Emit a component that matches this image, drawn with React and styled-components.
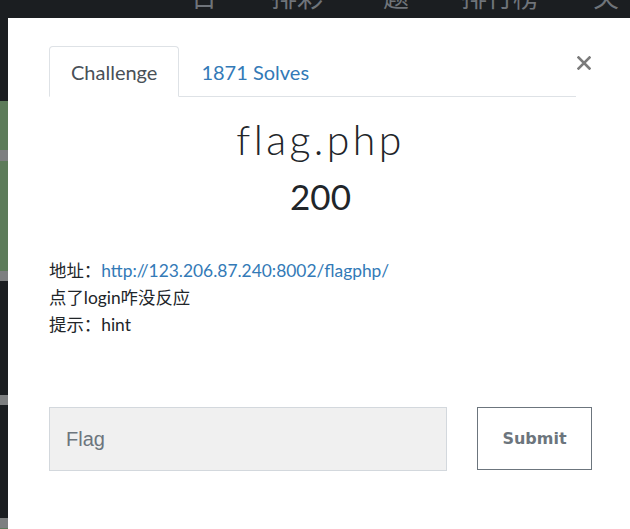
import React from 'react';
import styled, { createGlobalStyle } from 'styled-components';

const GlobalStyle = createGlobalStyle`
    html, body {
        margin: 0;
        padding: 0;
        height: 100%;
        overflow: hidden;
        background: #1b1e21;
    }
    #root {
        height: 100%;
    }
`;

const Page = styled.div`
    height: 100vh;
    display: flex;
    flex-direction: column;
    background: #1b1e21;
`;

const TopNav = styled.div`
    height: 18px;
    flex: none;
    display: flex;
    overflow: hidden;
    font-family: 'Noto Sans CJK SC', sans-serif;
    font-size: 26px;
    color: #6f747a;
    line-height: 1;
`;

const NavItem = styled.span`
    margin-top: -17px;
    margin-left: ${(props) => props.gap}px;
    white-space: nowrap;
`;

const Side = styled.div`
    width: 8px;
    flex: 1;
    display: flex;
    flex-direction: column;
`;

const Band = styled.div`
    height: ${(props) => props.h}px;
    flex: ${(props) => (props.grow ? 1 : 'none')};
    background: ${(props) => props.color};
`;

const Modal = styled.div`
    position: fixed;
    left: 8px;
    top: 18px;
    width: 624px;
    bottom: 0;
    background: #fff;
    box-sizing: border-box;
    padding: 28px 40px 0 41px;
    font-family: Lato, 'Noto Sans CJK SC', sans-serif;
    color: #212529;
`;

const Header = styled.div`
    display: flex;
    align-items: flex-start;
`;

const Tabs = styled.div`
    flex: 1;
    display: flex;
    border-bottom: 1px solid #dee2e6;
`;

const Tab = styled.div`
    height: 51px;
    box-sizing: border-box;
    padding: 0 21px;
    display: flex;
    align-items: center;
    font-size: 20px;
    margin-bottom: -1px;
    border: 1px solid ${(props) => (props.active ? '#dee2e6' : 'transparent')};
    border-bottom-color: ${(props) => (props.active ? '#fff' : 'transparent')};
    border-radius: 4px 4px 0 0;
    background: ${(props) => (props.active ? '#fff' : 'transparent')};
    color: ${(props) => (props.active ? '#495057' : '#337ab7')};
`;

const Close = styled.button`
    width: 16px;
    height: 16px;
    margin-top: 9px;
    padding: 0;
    border: 0;
    background: none;
    display: flex;
    align-items: center;
    justify-content: center;
`;

const Title = styled.h1`
    margin: 19px 0 0;
    text-align: center;
    font-size: 41px;
    line-height: 48px;
    font-weight: 300;
    letter-spacing: 3.4px;
    color: #212529;
`;

const Points = styled.h2`
    margin: 11px 0 0;
    text-align: center;
    font-size: 35px;
    line-height: 42px;
    font-weight: 400;
    color: #212529;
`;

const Description = styled.div`
    margin-top: 40px;
    font-size: 17.4px;
    line-height: 27px;
    color: #212529;
`;

const Line = styled.div``;

const Link = styled.a`
    color: #337ab7;
    text-decoration: none;
`;

const SubmitRow = styled.div`
    margin-top: 69px;
    display: flex;
    gap: 30px;
`;

const FlagInput = styled.input`
    flex: 1;
    min-width: 0;
    height: 64px;
    box-sizing: border-box;
    background: #f0f0f0;
    border: 1px solid #d3d8dd;
    padding: 0 16px;
    font-family: 'Liberation Sans', Arial, sans-serif;
    font-size: 20px;
    color: #495057;
    outline: none;
    &::placeholder {
        color: #6c757d;
    }
`;

const SubmitButton = styled.button`
    width: 115px;
    height: 63px;
    box-sizing: border-box;
    background: #fff;
    border: 1px solid #6c757d;
    font-family: 'DejaVu Sans', sans-serif;
    font-weight: bold;
    font-size: 16px;
    color: #6c757d;
`;

const CloseIcon = () => (
    <svg width="14" height="14" viewBox="0 0 14 14">
        <path d="M1.5 1.5 L12.5 12.5 M12.5 1.5 L1.5 12.5" stroke="#7b7b7b" strokeWidth="2.6" strokeLinecap="square" />
    </svg>
);

const bands = [
    { h: 83, color: '#1b1e21' },
    { h: 49, color: '#5d7b5a' },
    { h: 11, color: '#7d7f80' },
    { h: 110, color: '#5d7b5a' },
    { h: 10, color: '#7d7f80' },
    { h: 114, color: '#1b1e21' },
    { h: 10, color: '#7d7f80' },
    { h: 113, color: '#1b1e21' },
    { h: 10, color: '#7d7f80' },
    { h: 0, color: '#5d7b5a', grow: true },
];

const navItems = [
    { label: '日', gap: 191 },
    { label: '排彩', gap: 54 },
    { label: '题', gap: 60 },
    { label: '排行榜', gap: 52 },
    { label: '关', gap: 54 },
];

const App = () => (
    <>
        <GlobalStyle />
        <Page>
            <TopNav>
                {navItems.map((n) => (
                    <NavItem key={n.label} gap={n.gap}>{n.label}</NavItem>
                ))}
            </TopNav>
            <Side>
                {bands.map((b, i) => (
                    <Band key={i} h={b.h} color={b.color} grow={b.grow} />
                ))}
            </Side>
        </Page>
        <Modal>
            <Header>
                <Tabs>
                    <Tab active>Challenge</Tab>
                    <Tab>1871 Solves</Tab>
                </Tabs>
                <Close aria-label="Close">
                    <CloseIcon />
                </Close>
            </Header>
            <Title>flag.php</Title>
            <Points>200</Points>
            <Description>
                <Line>
                    地址：<Link href="#">http://123.206.87.240:8002/flagphp/</Link>
                </Line>
                <Line>点了login咋没反应</Line>
                <Line>提示：hint</Line>
            </Description>
            <SubmitRow>
                <FlagInput placeholder="Flag" />
                <SubmitButton>Submit</SubmitButton>
            </SubmitRow>
        </Modal>
    </>
);

export default App;
